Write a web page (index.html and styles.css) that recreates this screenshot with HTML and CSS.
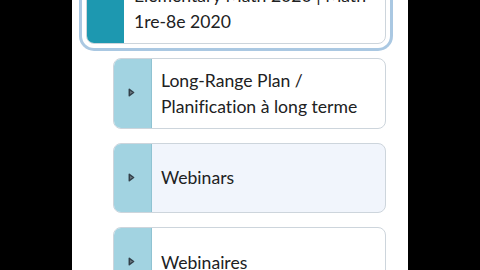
FILE: index.html
```html
<!DOCTYPE html>
<html>
<head>
<meta charset="utf-8">
<link rel="stylesheet" href="styles.css">
</head>
<body>
<div class="page">
  <div class="list">
    <div class="card card-top">
      <div class="stripe stripe-teal"></div>
      <div class="text text-top">Elementary Math 2020 | Math<br>1re-8e 2020</div>
    </div>
    <div class="card card-sub">
      <div class="stripe stripe-light">
        <svg class="caret" viewBox="0 0 7 9" width="7" height="9"><path d="M1.3 1.3 L5.6 4.5 L1.3 7.7 Z" fill="#6b7880" stroke="#33404a" stroke-width="1.5" stroke-linejoin="round"/></svg>
      </div>
      <div class="text">Long-Range Plan /<br>Planification à long terme</div>
    </div>
    <div class="card card-sub card-hover">
      <div class="stripe stripe-light">
        <svg class="caret" viewBox="0 0 7 9" width="7" height="9"><path d="M1.3 1.3 L5.6 4.5 L1.3 7.7 Z" fill="#6b7880" stroke="#33404a" stroke-width="1.5" stroke-linejoin="round"/></svg>
      </div>
      <div class="text">Webinars</div>
    </div>
    <div class="card card-sub">
      <div class="stripe stripe-light">
        <svg class="caret" viewBox="0 0 7 9" width="7" height="9"><path d="M1.3 1.3 L5.6 4.5 L1.3 7.7 Z" fill="#6b7880" stroke="#33404a" stroke-width="1.5" stroke-linejoin="round"/></svg>
      </div>
      <div class="text">Webinaires</div>
    </div>
  </div>
</div>
</body>
</html>
```
FILE: styles.css
```css
html, body {
  margin: 0;
  padding: 0;
  background: #000;
  overflow: hidden;
  height: 270px;
}
.page {
  width: 336px;
  margin-left: 72px;
  height: 270px;
  background: #fff;
  overflow: hidden;
  font-family: Lato, "Noto Sans", sans-serif;
  font-variant-ligatures: none;
  color: #202122;
}
.list {
  display: flex;
  flex-direction: column;
  gap: 14px;
  margin-top: -26px;
}
.card {
  display: flex;
  border: 1px solid #cdd5dc;
  border-radius: 8px;
  overflow: hidden;
  background: #fff;
  box-sizing: border-box;
}
.card-top {
  margin-left: 14px;
  width: 300px;
  height: 70px;
  box-shadow: 0 0 0 4px #fff, 0 0 0 7px #aac8e2;
  overflow: visible;
  position: relative;
}
.card-sub {
  margin-left: 41px;
  width: 273px;
  height: 71px;
}
.card-hover {
  background: #f1f5fc;
  height: 70px;
}
.stripe {
  flex: none;
  display: flex;
  align-items: center;
  justify-content: center;
}
.stripe-teal {
  width: 37px;
  background: #1d98b0;
  border-radius: 7px 0 0 7px;
}
.stripe-light {
  width: 38px;
  background: #a2d3e1;
  border-right: 1px solid #8fc3d2;
  padding-right: 2px;
  padding-bottom: 3px;
  box-sizing: border-box;
}
.card-hover .stripe-light {
  padding-bottom: 1px;
}
.caret {
  display: block;
}
.text {
  display: flex;
  align-items: center;
  padding-left: 9px;
  font-size: 17.6px;
  line-height: 26px;
  white-space: nowrap;
}
.text-top {
  padding-left: 10px;
  align-items: flex-end;
  padding-bottom: 8px;
}
```
